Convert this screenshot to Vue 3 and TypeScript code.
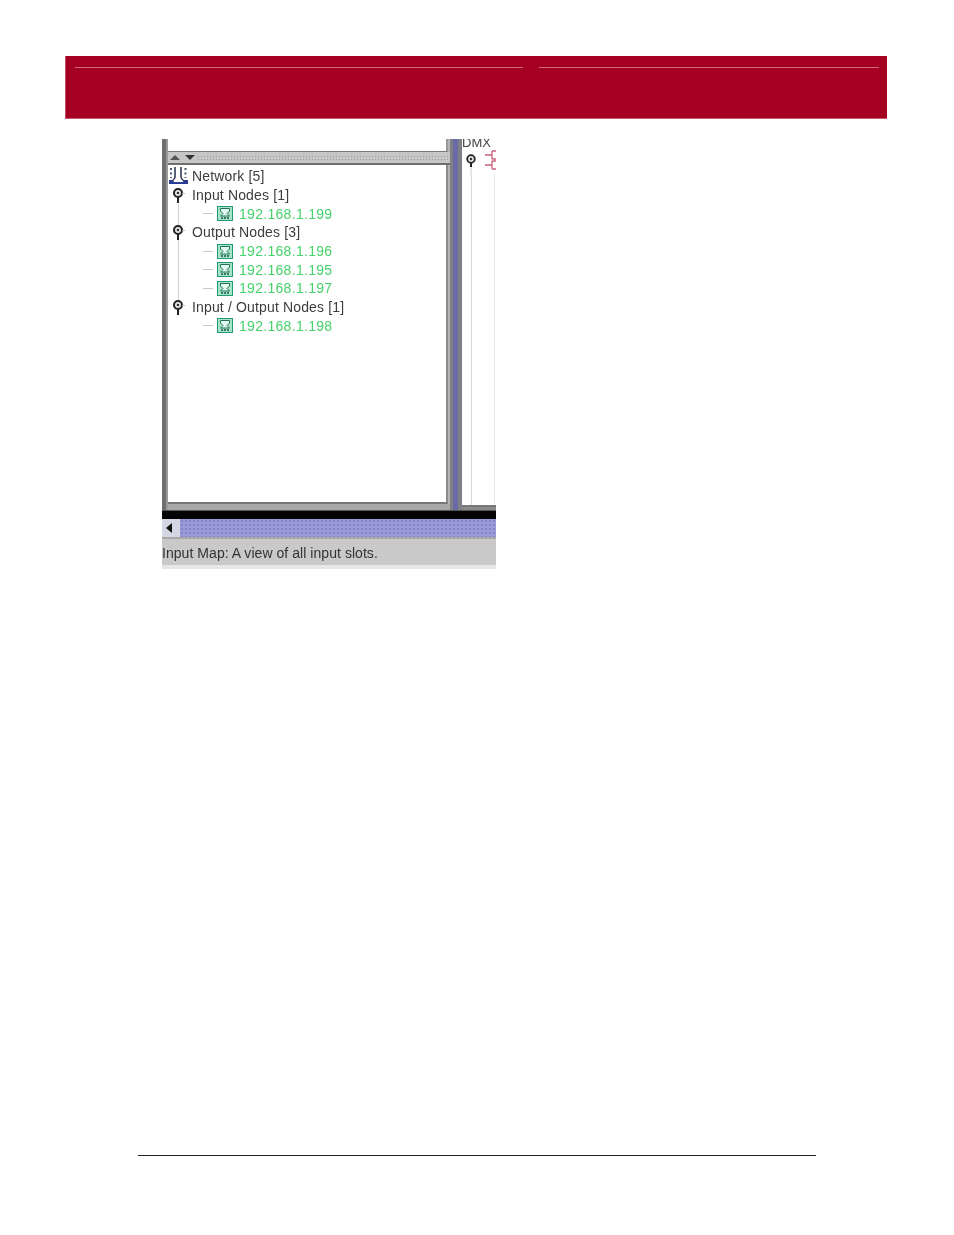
<script setup lang="ts">
interface Row { label: string; kind: 'root' | 'group' | 'leaf' }
const rows: Row[] = [
  { label: 'Network [5]', kind: 'root' },
  { label: 'Input Nodes [1]', kind: 'group' },
  { label: '192.168.1.199', kind: 'leaf' },
  { label: 'Output Nodes [3]', kind: 'group' },
  { label: '192.168.1.196', kind: 'leaf' },
  { label: '192.168.1.195', kind: 'leaf' },
  { label: '192.168.1.197', kind: 'leaf' },
  { label: 'Input / Output Nodes [1]', kind: 'group' },
  { label: '192.168.1.198', kind: 'leaf' },
]
</script>

<template>
  <div class="page">
    <header class="band">
      <div class="band-rules">
        <i class="rule rule-a"></i>
        <i class="rule rule-b"></i>
      </div>
    </header>

    <section class="shot">
      <div class="panes">
        <div class="left-edge"></div>
        <div class="left-pane">
          <div class="top-box"></div>
          <div class="gripper">
            <svg class="arrows" width="28" height="7" viewBox="0 0 28 7">
              <path d="M2 6 L7 1 L12 6Z" fill="#555" />
              <path d="M17 1 L27 1 L22 6Z" fill="#333" />
            </svg>
            <div class="dots"></div>
          </div>
          <div class="tree">
            <div class="trunk"></div>
            <div v-for="row in rows" :key="row.label" class="row" :class="row.kind">
              <svg v-if="row.kind === 'root'" class="net" width="21" height="20" viewBox="0 0 21 20">
                <path d="M7 1 V11 Q7 13 4 15 M13 1 V11 Q13 13 16 15" stroke="#26304f" stroke-width="1.500" fill="none" />
                <path d="M1 14 V18 H20 V14 H16 L15 16 H6 L5 14Z" fill="#2a3c96" />
                <path d="M3 2 V12 M17.500 2 V12" stroke="#4a5a78" stroke-width="2" stroke-dasharray="2 2.500" fill="none" />
              </svg>
              <svg v-else-if="row.kind === 'group'" class="key" width="14" height="15" viewBox="0 0 14 15">
                <path d="M7 7 V15" stroke="#222" stroke-width="2" />
                <circle cx="7" cy="5" r="4" fill="#e8e8ee" stroke="#222" stroke-width="2" />
                <circle cx="7" cy="5" r="1.300" fill="#333" />
                <path d="M11 5.500 H14" stroke="#bbb" stroke-width="1" />
              </svg>
              <template v-else>
                <i class="stub"></i>
                <svg class="node" width="16" height="15" viewBox="0 0 16 15">
                  <rect x="0.500" y="0.500" width="15" height="14" fill="#a9e4c6" stroke="#1f9a78" />
                  <path d="M3.500 2.500 H12.500 V5 L10 7.500 L12.500 10 H3.500 L6 7.500 L3.500 5Z" fill="#e4fbef" stroke="#23705c" />
                  <path d="M4 12 H12" stroke="#14584a" stroke-width="1.600" stroke-dasharray="2 1" fill="none" />
                </svg>
              </template>
              <span class="label">{{ row.label }}</span>
            </div>
          </div>
          <div class="pane-foot"></div>
        </div>
        <div class="divider"><i></i></div>
        <div class="right-pane">
          <div class="dmx">DMX</div>
          <svg class="map" width="34" height="30" viewBox="0 0 34 30">
            <path d="M9 19 V30" stroke="#ccc" stroke-width="1" />
            <path d="M9 16 V22" stroke="#222" stroke-width="2" />
            <circle cx="9" cy="14" r="3.800" fill="#dfe0e8" stroke="#222" stroke-width="1.800" />
            <circle cx="9" cy="14" r="1.200" fill="#333" />
            <path d="M23 10 H30 M23 20 H30 M30 6 V14 M30 16 V24 M30 6 H34 M30 14 H34 M30 16 H34 M30 24 H34" stroke="#c9607c" stroke-width="1.300" fill="none" />
          </svg>
          <div class="right-foot"></div>
          <div class="right-base"></div>
        </div>
      </div>
      <div class="black"></div>
      <div class="scroller">
        <div class="scroll-btn"><i></i></div>
        <div class="track"></div>
      </div>
      <div class="status">Input Map: A view of all input slots.</div>
      <div class="status-foot"></div>
    </section>

    <footer class="foot-rule"></footer>
  </div>
</template>

<style>
html, body { background: #fff; }
</style>

<style scoped>
.page {
  width: 954px;
  height: 1235px;
  padding-top: 56px;
  box-sizing: border-box;
  display: flex;
  flex-direction: column;
  background: #fff;
  overflow: hidden;
}
.band {
  margin-left: 65px;
  width: 822px;
  height: 63px;
  box-sizing: border-box;
  padding: 11px 8px 0 10px;
  background: #a50021;
  border-left: 1px solid #bd4a62;
  border-bottom: 1px solid #c4586f;
  flex: none;
}
.band-rules { display: flex; height: 1px; }
.rule { display: block; height: 1px; background: #cf6a80; }
.rule-a { width: 448px; margin-left: -1px; }
.rule-b { width: 340px; margin-left: 16px; }

.shot {
  margin: 20px 0 0 162px;
  width: 334px;
  height: 430px;
  flex: none;
  display: flex;
  flex-direction: column;
  overflow: hidden;
  font-family: "Liberation Sans", Arial, sans-serif;
  filter: blur(0.35px);
}
.panes { display: flex; height: 371px; flex: none; background: #8f8f8f; }
.left-edge {
  width: 6px;
  flex: none;
  background: linear-gradient(90deg, #6f6f6f 0 4px, #9a9a9a 4px 6px);
}
.left-pane { width: 282px; flex: none; display: flex; flex-direction: column; background: #b4b4b4; }
.top-box {
  height: 12px;
  flex: none;
  background: #fff;
  border-right: 2px solid #9a9a9a;
  border-bottom: 1px solid #777;
  margin-right: 2px;
}
.gripper {
  height: 11px;
  flex: none;
  display: flex;
  align-items: center;
  gap: 1px;
  background: #c6c6c6;
  border-bottom: 2px solid #6e6e6e;
}
.arrows { flex: none; }
.dots {
  flex: 1;
  height: 6px;
  background-image: radial-gradient(#9c9c9c 0.8px, transparent 1px);
  background-size: 3px 3px;
}
.tree {
  position: relative;
  height: 339px;
  flex: none;
  padding-top: 2px;
  box-sizing: border-box;
  background: #fff;
  border-right: 2px solid #8a8a8a;
  border-bottom: 2px solid #777;
  margin-right: 2px;
  font-size: 14px;
  color: #3d3d3d;
}
.trunk {
  position: absolute;
  left: 10px;
  top: 39px;
  width: 1px;
  height: 104px;
  background: #cfcfcf;
}
.row {
  position: relative;
  height: 18.700px;
  display: flex;
  align-items: center;
  white-space: nowrap;
  letter-spacing: 0.15px;
}
.net { margin-left: 0; flex: none; }
.root .label { margin-left: 3px; }
.key { margin-left: 3px; flex: none; }
.group .label { margin-left: 7px; }
.stub { display: block; width: 10px; height: 1px; margin-left: 35px; background: #c8c8c8; flex: none; }
.node { margin-left: 4px; flex: none; }
.leaf .label { margin-left: 6px; color: #46d26a; letter-spacing: 0.3px; }
.pane-foot { flex: 1; background: #a8a8a8; }
.divider {
  width: 12px;
  flex: none;
  display: flex;
  justify-content: center;
  background: #7f7f86;
}
.divider i { display: block; width: 5px; margin-right: 1px; background: #6a6aa8; }
.right-pane {
  flex: 1;
  display: flex;
  flex-direction: column;
  background: #fff;
  overflow: hidden;
}
.dmx {
  height: 10px;
  line-height: 7px;
  font-size: 13px;
  color: #444;
  flex: none;
}
.map { flex: none; margin-top: -4px; }
.right-foot {
  margin-left: 9px;
  margin-right: 1px;
  flex: 1;
  border-left: 1px solid #d8d8d8;
  border-right: 1px solid #e6e6e6;
}
.right-base { height: 3px; flex: none; background: #8a8a8a; border-top: 2px solid #777; background-clip: padding-box; }
.black { height: 8px; flex: none; background: #050505; border-top: 1px solid #555; }
.scroller { height: 18px; flex: none; display: flex; background: #d6d6e0; }
.scroll-btn {
  width: 18px;
  flex: none;
  display: flex;
  align-items: center;
  justify-content: center;
  background: #d4d6e4;
}
.scroll-btn i {
  display: block;
  width: 0;
  height: 0;
  border-top: 5px solid transparent;
  border-bottom: 5px solid transparent;
  border-right: 6px solid #111;
  margin-right: 4px;
}
.track {
  flex: 1;
  background-color: #9a9bdb;
  background-image: radial-gradient(#8384c4 0.9px, transparent 1.100px);
  background-size: 4px 4px;
}
.status {
  height: 28px;
  flex: none;
  box-sizing: border-box;
  background: #c9c9c9;
  border-top: 2px solid #a8a8a8;
  font-size: 14px;
  line-height: 28px;
  color: #333;
  letter-spacing: 0.05px;
  white-space: nowrap;
}
.status-foot { flex: 1; background: #e6e6e2; }

.foot-rule {
  margin: 586px 0 0 138px;
  width: 678px;
  height: 1px;
  background: #222;
  flex: none;
}
</style>
